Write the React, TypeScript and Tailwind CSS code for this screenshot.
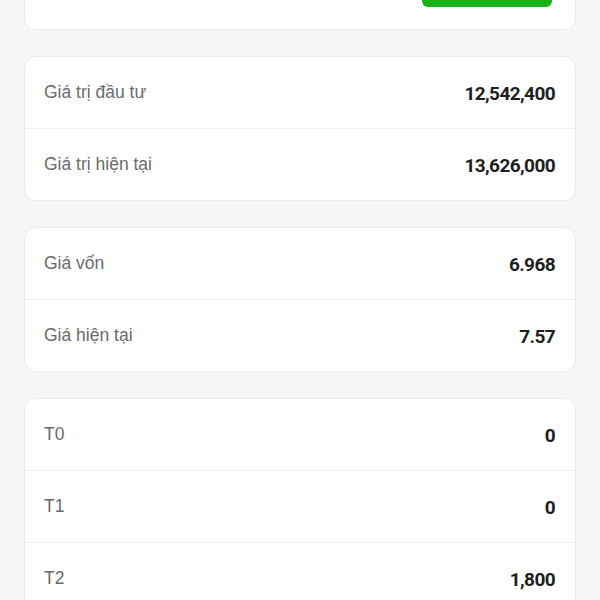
import React from "react";

type Row = { label: string; value: string };

const groups: Row[][] = [
    [
        { label: "Giá trị đầu tư", value: "12,542,400" },
        { label: "Giá trị hiện tại", value: "13,626,000" },
    ],
    [
        { label: "Giá vốn", value: "6.968" },
        { label: "Giá hiện tại", value: "7.57" },
    ],
    [
        { label: "T0", value: "0" },
        { label: "T1", value: "0" },
        { label: "T2", value: "1,800" },
    ],
];

const InfoCard: React.FC<{ rows: Row[] }> = ({ rows }) => (
    <div className="rounded-[12px] border border-[#ececec] bg-white">
        {rows.map((row, i) => (
            <div
                key={row.label}
                className={`flex items-start justify-between pl-[19px] pr-[20px] ${i > 0 ? "h-[72px] border-t border-[#efefef]" : "h-[71px]"}`}
            >
                <span className="pt-[26px] font-['Liberation_Sans',sans-serif] text-[17.5px] leading-[18px] text-[#6b6b6b]">{row.label}</span>
                <span className="pt-[27px] font-['Roboto',sans-serif] text-[19px] font-bold leading-[19px] tracking-[-0.6px] text-[#1e1e1e]">{row.value}</span>
            </div>
        ))}
    </div>
);

export default function App() {
    return (
        <div className="min-h-[600px] w-[600px] overflow-hidden bg-[#f6f6f6]">
            <div className="flex flex-col gap-[26px] px-[24px]">
                <div className="flex h-[30px] justify-end rounded-b-[12px] border border-t-0 border-[#ececec] bg-white pr-[23px]">
                    <div className="h-[7px] w-[130px] rounded-b-[6px] bg-[#17b417]" />
                </div>
                {groups.map((rows, i) => (
                    <InfoCard key={i} rows={rows} />
                ))}
            </div>
        </div>
    );
}
